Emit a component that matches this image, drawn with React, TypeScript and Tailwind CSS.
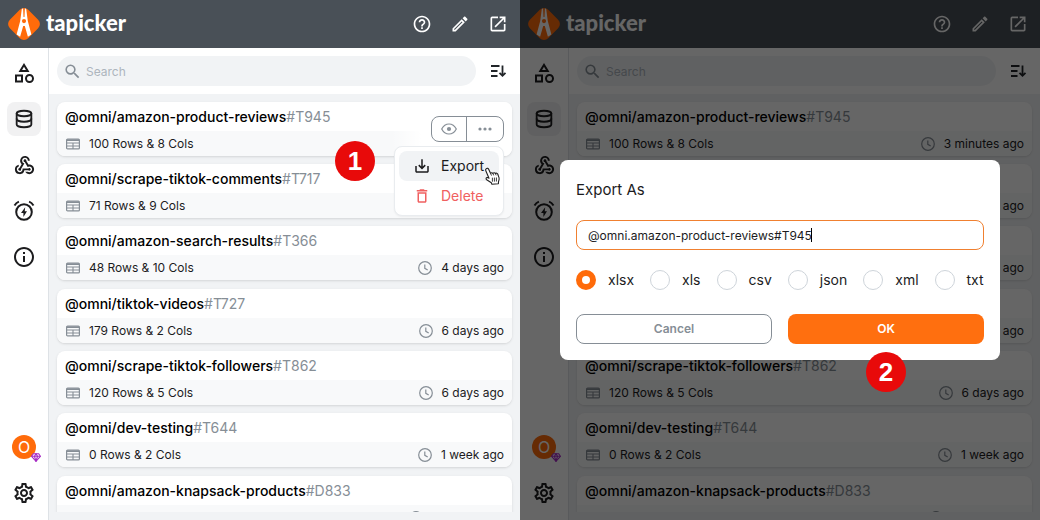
import React, { useId, useState } from 'react';
import {
  MdDeleteOutline,
  MdHelpOutline,
  MdInfoOutline,
  MdOpenInNew,
  MdOutlineCategory,
  MdOutlineEdit,
  MdOutlineSettings,
  MdSaveAlt,
  MdSearch,
  MdWebhook,
} from 'react-icons/md';
import { TbDatabase } from 'react-icons/tb';

// ── Data ──────────────────────────────────────────────────────────────────────
const DATASETS = [
  { name: '@omni/amazon-product-reviews',  tag: '#T945', size: '100 Rows & 8 Cols', age: '3 minutes ago' },
  { name: '@omni/scrape-tiktok-comments',  tag: '#T717', size: '71 Rows & 9 Cols',  age: '4 days ago'    },
  { name: '@omni/amazon-search-results',   tag: '#T366', size: '48 Rows & 10 Cols', age: '4 days ago'    },
  { name: '@omni/tiktok-videos',           tag: '#T727', size: '179 Rows & 2 Cols', age: '6 days ago'    },
  { name: '@omni/scrape-tiktok-followers', tag: '#T862', size: '120 Rows & 5 Cols', age: '6 days ago'    },
  { name: '@omni/dev-testing',             tag: '#T644', size: '0 Rows & 2 Cols',   age: '1 week ago'    },
  { name: '@omni/amazon-knapsack-products', tag: '#D833', size: '24 Rows & 6 Cols', age: '2 weeks ago'   },
];

const FORMATS = ['xlsx', 'xls', 'csv', 'json', 'xml', 'txt'];

// ── Icons ─────────────────────────────────────────────────────────────────────
function LogoMark() {
  return (
    <svg viewBox="0 0 32 32" className="size-8" aria-hidden="true">
      <rect x="3" y="3" width="26" height="26" rx="6" fill="#ff6b0a" transform="rotate(45 16 16)" />
      <path
        d="M13.8.9 12.2 13 8.600 26.600l3.500 2.200L15.200 18h1.600l3.100 10.800 3.500-2.200L19.800 13 18.200.9 16.900.3 16.500 9h-1L15.100.3Z"
        fill="#fff"
      />
      <circle cx="16" cy="13.1" r="2.1" fill="#ff6b0a" />
    </svg>
  );
}

function AlarmBoltIcon() {
  return (
    <svg viewBox="0 0 24 24" className="size-6" fill="none" stroke="currentColor" strokeWidth="2" aria-hidden="true">
      <circle cx="12" cy="13" r="7.8" />
      <path d="M2.500 6.400C3.600 4.600 4.900 3.400 6.900 2.600M21.500 6.400c-1.100-1.800-2.400-3-4.400-3.800" />
      <path d="M13.2 8.2 9 14h2.400v4L15 12.200h-2.300Z" fill="currentColor" stroke="none" />
    </svg>
  );
}

function SortIcon() {
  return (
    <svg viewBox="0 0 20 20" className="size-5" fill="none" stroke="currentColor" strokeWidth="1.800" aria-hidden="true">
      <path d="M3 5h8.500M3 10h6.500M3 15h6.500M14.500 4.400v10M11.500 11.800l3 3 3-3" />
    </svg>
  );
}

function TableIcon() {
  return (
    <svg viewBox="0 0 14 12" className="h-3 w-3.5 text-[#868e96]" fill="none" stroke="currentColor" aria-hidden="true">
      <rect x=".6" y="1.100" width="12.800" height="9.800" rx="1" strokeWidth="1.200" />
      <path d="M1 2.200h12" strokeWidth="1.600" />
      <path d="M1 5h12M1 8h12M7 4.500V11" strokeWidth="1.100" />
    </svg>
  );
}

function ClockIcon() {
  return (
    <svg viewBox="0 0 14 14" className="size-3.5 text-[#868e96]" fill="none" stroke="currentColor" strokeWidth="1.200" aria-hidden="true">
      <circle cx="7" cy="7" r="6.300" />
      <path d="M6.800 3.400v3.900l2.900 1.700" />
    </svg>
  );
}

function EyeIcon() {
  return (
    <svg viewBox="0 0 16 12" className="h-3 w-4" fill="none" stroke="currentColor" strokeWidth="1.200" aria-hidden="true">
      <path d="M.7 6C2.300 2.900 4.900 1 8 1s5.700 1.900 7.300 5C13.700 9.100 11.100 11 8 11S2.300 9.100.7 6Z" />
      <circle cx="8" cy="6" r="2.100" fill="currentColor" stroke="none" />
    </svg>
  );
}

function DotsIcon() {
  return (
    <svg viewBox="0 0 14 4" className="h-1 w-3.5" fill="currentColor" aria-hidden="true">
      <circle cx="2" cy="2" r="1.600" />
      <circle cx="7" cy="2" r="1.600" />
      <circle cx="12" cy="2" r="1.600" />
    </svg>
  );
}

function GemIcon() {
  return (
    <svg viewBox="0 0 10 9" className="h-[9px] w-2.5" fill="none" stroke="#a62bc4" strokeWidth="1.100" aria-hidden="true">
      <path d="M2.300.8h5.400L9.400 3.300 5 8.300.6 3.300Z" fill="#fff" />
      <path d="M.6 3.300h8.800M3.400 3.300 5 8l1.600-4.700L5 .8Z" />
    </svg>
  );
}

function HandCursor() {
  return (
    <svg viewBox="0 0 17 18" className="h-[18px] w-[17px]" aria-hidden="true">
      <path
        d="M2.200 1.700C3.200.9 4.300 1.400 4.800 2.500L6.500 6.300C7.100 5.500 8.300 5.500 8.900 6.400 9.600 5.600 10.800 5.600 11.400 6.500 12.200 5.800 13.400 6.100 13.800 7.200L15 10.600C15.500 12.200 14.900 13.300 14.500 14.700L14.400 16.700 7.900 17.200 7.300 15.700 2.700 12.700C1.500 11.800 2.100 10.300 3.500 10.600L5 11.200 1.800 3.800C1.400 2.900 1.500 2.200 2.200 1.700Z"
        fill="#fff"
        stroke="#222"
        strokeWidth="1.100"
        strokeLinejoin="round"
      />
      <path d="M8.400 10.700v4M10.400 10.600v4M12.400 10.500v4M6.500 6.300l1 2.300M8.900 6.400l.8 2M11.400 6.500l.7 1.800" stroke="#222" strokeWidth=".9" />
    </svg>
  );
}

function StepBadge({ n }: { n: number }) {
  return (
    <span className="flex size-10 items-center justify-center rounded-full bg-[#e80a0a] font-['Liberation_Sans',sans-serif] text-[26px] leading-none font-bold text-white">
      {n}
    </span>
  );
}

// ── App chrome ────────────────────────────────────────────────────────────────
function Header() {
  return (
    <header className="flex h-12 shrink-0 items-center justify-between bg-[#495057] pr-3 pl-2 text-white">
      <a href="#" className="flex items-center gap-1.5">
        <LogoMark />
        <span className="pb-0.5 font-['Lato',sans-serif] text-[22px] leading-8 font-black">tapicker</span>
      </a>
      <div className="flex items-center gap-[18px]">
        <button type="button" aria-label="Help"><MdHelpOutline className="size-5" /></button>
        <button type="button" aria-label="Edit"><MdOutlineEdit className="size-5" /></button>
        <button type="button" aria-label="Open in new window"><MdOpenInNew className="size-5" /></button>
      </div>
    </header>
  );
}

function Sidebar() {
  const item = 'flex size-[34px] items-center justify-center rounded-lg';
  return (
    <nav aria-label="Sections" className="flex w-[49px] shrink-0 flex-col items-center gap-3 border-r border-[#dee2e6] pt-2 pb-2.5 text-[#1c1c1e]">
      <button type="button" aria-label="Recipes" className={item}><MdOutlineCategory className="size-6" /></button>
      <button type="button" aria-label="Data" className={`${item} bg-[#f1f1f2]`}><TbDatabase className="size-[22px]" /></button>
      <button type="button" aria-label="Webhooks" className={item}><MdWebhook className="size-[23px]" /></button>
      <button type="button" aria-label="Schedules" className={item}><AlarmBoltIcon /></button>
      <button type="button" aria-label="About" className={item}><MdInfoOutline className="size-6" /></button>
      <button type="button" aria-label="Account" className={`${item} relative mt-auto`}>
        <span className="flex size-6 items-center justify-center rounded-full bg-[#ff6b0a] text-base leading-none text-white">O</span>
        <span className="absolute right-0 bottom-0.5"><GemIcon /></span>
      </button>
      <button type="button" aria-label="Settings" className={item}><MdOutlineSettings className="size-6" /></button>
    </nav>
  );
}

function Toolbar() {
  const searchId = useId();
  return (
    <div className="flex shrink-0 items-center gap-3 bg-white py-2 pr-3 pl-2">
      <div className="flex h-[30px] min-w-0 flex-1 items-center gap-1 rounded-full bg-[#f1f3f5] pl-1.5">
        <label htmlFor={searchId} aria-label="Search"><MdSearch className="size-[19px] text-[#868e96]" /></label>
        <input
          id={searchId}
          type="search"
          placeholder="Search"
          className="h-full min-w-0 flex-1 bg-transparent text-xs outline-none placeholder:text-[#adb5bd]"
        />
      </div>
      <button type="button" aria-label="Sort" className="text-[#212529]"><SortIcon /></button>
    </div>
  );
}

// ── Row actions with the open menu ────────────────────────────────────────────
function RowActions() {
  return (
    <div className="absolute inset-y-0 right-0 z-10 flex items-center rounded-r-lg bg-linear-to-r from-transparent to-white to-25% pr-2 pl-10">
      <div className="relative">
        <div className="flex h-[26px] divide-x divide-[#868e96] rounded-lg border border-[#868e96] bg-white text-[#868e96]">
          <button type="button" aria-label="Preview" className="flex w-[35px] items-center justify-center"><EyeIcon /></button>
          <button type="button" aria-label="More" aria-expanded="true" className="flex w-9 items-center justify-center"><DotsIcon /></button>
        </div>
        <div role="menu" className="absolute top-full right-0 mt-1 flex w-[110px] flex-col rounded-lg border border-[#e9ecef] bg-white p-1 text-sm shadow-xs">
          <button type="button" role="menuitem" className="flex h-[30px] items-center gap-2.5 rounded-lg bg-[#f1f3f5] pl-3.5 text-[#1c1c1e]">
            <MdSaveAlt className="size-[18px]" />
            Export
          </button>
          <button type="button" role="menuitem" className="flex h-[30px] items-center gap-2.5 rounded-lg pl-3.5 text-[#f06060]">
            <MdDeleteOutline className="size-[18px]" />
            Delete
          </button>
          <span className="absolute top-5 right-0.5"><HandCursor /></span>
          <span className="absolute -top-1.5 right-full mr-5"><StepBadge n={1} /></span>
        </div>
      </div>
    </div>
  );
}

type Dataset = (typeof DATASETS)[number];

function DatasetCard({ dataset, active }: { dataset: Dataset; active: boolean }) {
  return (
    <li className="relative shrink-0 rounded-lg bg-white shadow-sm nth-[3n]:mb-px">
      <h3 className="px-2 text-sm leading-[29px] font-medium text-black">
        {dataset.name}
        <span className="font-normal text-[#868e96]">{dataset.tag}</span>
      </h3>
      <div className="flex h-[25px] items-center justify-between rounded-b-lg bg-[#f8f9fa] pr-2 pl-[9px] text-xs text-[#1c1c1e]">
        <span className="flex items-center gap-[9px]">
          <TableIcon />
          {dataset.size}
        </span>
        {/* the age gives way to the row actions */}
        {!active && (
          <span className="flex items-center gap-[9px]">
            <ClockIcon />
            {dataset.age}
          </span>
        )}
      </div>
      {active && <RowActions />}
    </li>
  );
}

function Panel({ menuOpen = false, children }: { menuOpen?: boolean; children?: React.ReactNode }) {
  return (
    <section className="relative flex min-w-0 flex-1 flex-col overflow-hidden bg-white">
      <Header />
      <div className="flex min-h-0 flex-1">
        <Sidebar />
        <div className="flex min-w-0 flex-1 flex-col bg-[#f1f3f5]">
          <Toolbar />
          <div className="min-h-0 flex-1 pb-2">
            <ul className="flex h-full flex-col gap-2 overflow-hidden px-2 pt-2">
              {DATASETS.map((dataset, i) => (
                <DatasetCard key={dataset.tag} dataset={dataset} active={menuOpen && i === 0} />
              ))}
            </ul>
          </div>
        </div>
      </div>
      {children}
    </section>
  );
}

// ── Export dialog ─────────────────────────────────────────────────────────────
function ExportDialog() {
  const [format, setFormat] = useState('xlsx');
  const titleId = useId();

  return (
    <div className="absolute inset-0 z-20 flex items-center bg-black/60 px-10">
      <form
        role="dialog"
        aria-labelledby={titleId}
        onSubmit={(e) => e.preventDefault()}
        className="w-full rounded-lg bg-white p-4 text-[#1c1c1e]"
      >
        <h2 id={titleId} className="text-[15px] leading-7">Export As</h2>

        <div className="relative mt-4">
          <input
            type="text"
            aria-label="File name"
            defaultValue="@omni.amazon-product-reviews#T945"
            className="block h-[30px] w-full rounded-lg border border-[#f08030] px-[11px] text-xs outline-none"
          />
          <span className="absolute top-2 left-[235px] h-3.5 w-px bg-black" />
        </div>

        <div className="mt-5 flex gap-4 text-sm leading-5">
          {FORMATS.map((f) => (
            <label key={f} className="flex items-center gap-3">
              <input
                type="radio"
                name="format"
                value={f}
                checked={format === f}
                onChange={() => setFormat(f)}
                className="size-5 appearance-none rounded-full border border-[#ced4da] checked:border-6 checked:border-[#ff6b0a]"
              />
              {f}
            </label>
          ))}
        </div>

        <div className="mt-6 grid grid-cols-2 gap-4 text-xs font-semibold">
          <button type="button" className="h-[30px] rounded-lg border border-[#868e96] text-[#868e96]">Cancel</button>
          <div className="relative">
            <button type="submit" className="h-[30px] w-full rounded-lg bg-[#ff6f0f] text-white">OK</button>
            <span className="absolute top-full left-1/2 mt-2 -translate-x-1/2"><StepBadge n={2} /></span>
          </div>
        </div>
      </form>
    </div>
  );
}

export default function App() {
  return (
    <main className="flex h-screen font-['Inter',sans-serif]">
      <Panel menuOpen />
      <Panel>
        <ExportDialog />
      </Panel>
    </main>
  );
}
